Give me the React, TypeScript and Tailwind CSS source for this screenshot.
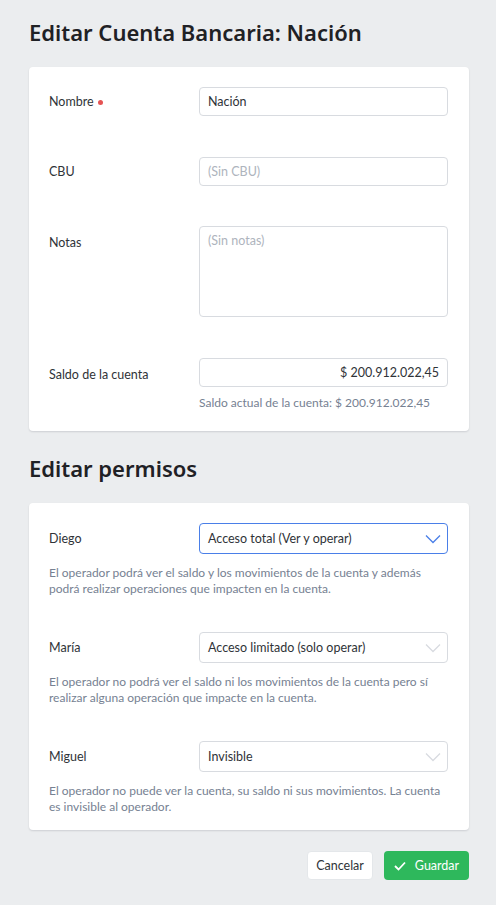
import React from 'react';

const body = {fontFamily: 'Lato, "Noto Sans", sans-serif'};

const Chevron = ({active}: {active?: boolean}) => (
    <svg width="16" height="10" viewBox="0 0 16 10" fill="none"
         className="pointer-events-none absolute right-[7px] top-1/2 -translate-y-1/2">
        <path d="M1 1.5 L8 8.5 L15 1.5" stroke={active ? '#4a7fe8' : '#d8dbe0'} strokeWidth="1.3"/>
    </svg>
);

type Perm = {name: string; value: string; desc: string; focused?: boolean};

const perms: Perm[] = [
    {
        name: 'Diego',
        value: 'Acceso total (Ver y operar)',
        desc: 'El operador podrá ver el saldo y los movimientos de la cuenta y además podrá realizar operaciones que impacten en la cuenta.',
        focused: true,
    },
    {
        name: 'María',
        value: 'Acceso limitado (solo operar)',
        desc: 'El operador no podrá ver el saldo ni los movimientos de la cuenta pero sí realizar alguna operación que impacte en la cuenta.',
    },
    {
        name: 'Miguel',
        value: 'Invisible',
        desc: 'El operador no puede ver la cuenta, su saldo ni sus movimientos. La cuenta es invisible al operador.',
    },
];

const App = () => {
    return (
        <div style={body}
             className="min-h-[905px] bg-[#ebedef] pl-[29px] pr-[27px] pt-[18px] pb-[26px] text-[12.5px] leading-[18px] text-[#2f3338]">
            <h1 className="font-['Noto_Sans',sans-serif] text-[22px] font-semibold leading-[28px] text-[#1f2125]">
                Editar Cuenta Bancaria: Nación
            </h1>

            <div className="mt-[21px] rounded-[4px] bg-white pl-[20px] pr-[21px] pt-[20px] pb-[19px] shadow-[0_1px_2px_rgba(0,0,21,0.13)]">
                <div className="flex items-center">
                    <label className="w-[150px]">
                        Nombre <span className="ml-[1px] inline-block h-[5px] w-[5px] rounded-full bg-[#e55353] align-middle"/>
                    </label>
                    <input defaultValue="Nación"
                           className="h-[29px] flex-1 rounded-[4px] border border-[#d8dbe0] px-[8px] outline-none"/>
                </div>
                <div className="mt-[41px] flex items-center">
                    <label className="w-[150px]">CBU</label>
                    <input placeholder="(Sin CBU)"
                           className="h-[29px] flex-1 rounded-[4px] border border-[#d8dbe0] px-[8px] outline-none placeholder:text-[#aeb4bd]"/>
                </div>
                <div className="mt-[40px] flex items-start">
                    <label className="w-[150px] pt-[8px]">Notas</label>
                    <textarea placeholder="(Sin notas)"
                              className="h-[91px] flex-1 resize-none rounded-[4px] border border-[#d8dbe0] px-[8px] py-[5px] outline-none placeholder:text-[#aeb4bd]"/>
                </div>
                <div className="mt-[41px] flex items-start">
                    <label className="w-[150px] pt-[8px]">Saldo de la cuenta</label>
                    <div className="flex-1">
                        <input defaultValue="$ 200.912.022,45"
                               className="h-[29px] w-full rounded-[4px] border border-[#d8dbe0] px-[8px] text-right outline-none"/>
                        <p className="mt-[7px] text-[12px] text-[#768192]">Saldo actual de la cuenta: $ 200.912.022,45</p>
                    </div>
                </div>
            </div>

            <h2 className="mt-[23px] font-['Noto_Sans',sans-serif] text-[22px] font-semibold leading-[28px] text-[#1f2125]">
                Editar permisos
            </h2>

            <div className="mt-[21px] rounded-[4px] bg-white pl-[20px] pr-[21px] pt-[20px] pb-[15px] shadow-[0_1px_2px_rgba(0,0,21,0.13)]">
                <div className="flex flex-col gap-[35px]">
                    {perms.map(p => (
                        <div key={p.name}>
                            <div className="flex items-center">
                                <label className="w-[150px]">{p.name}</label>
                                <div className="relative flex-1">
                                    <div className={p.focused
                                        ? 'flex h-[31px] items-center rounded-[4px] border border-[#4a7fe8] px-[8px]'
                                        : 'flex h-[31px] items-center rounded-[4px] border border-[#d8dbe0] px-[8px]'}>
                                        {p.value}
                                    </div>
                                    <Chevron active={p.focused}/>
                                </div>
                            </div>
                            <p className="mt-[11px] text-[12px] leading-[16px] text-[#768192]">{p.desc}</p>
                        </div>
                    ))}
                </div>
            </div>

            <div className="mt-[21px] flex justify-end gap-[11px]">
                <button className="flex h-[29px] w-[66px] items-center justify-center rounded-[4px] border border-[#e4e7ea] bg-white text-[#2f3338]">
                    Cancelar
                </button>
                <button className="flex h-[29px] w-[85px] items-center justify-center gap-[9px] rounded-[4px] bg-[#2eb85c] text-white">
                    <svg width="12" height="10" viewBox="0 0 12 10" fill="none">
                        <path d="M1 5 L4.5 8.5 L11 1.5" stroke="white" strokeWidth="1.8"/>
                    </svg>
                    Guardar
                </button>
            </div>
        </div>
    );
};

export default App;
